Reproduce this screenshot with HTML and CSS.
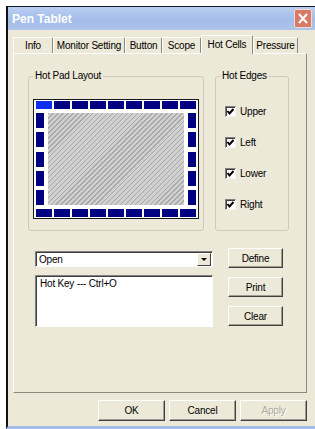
FILE: index.html
```html
<!DOCTYPE html>
<html lang="en">
<head>
  <meta charset="UTF-8" />
  <title>Pen Tablet</title>
  <link rel="stylesheet" href="styles.css">
</head>
<body>
  <div class="window">
    <div class="titlebar">
      <span class="title">Pen Tablet</span>
      <span class="close">
        <svg width="18" height="19" viewBox="0 0 18 19"><path d="M5 5 L13 14 M13 5 L5 14" stroke="#fff" stroke-width="2" fill="none"/></svg>
      </span>
    </div>

    <div class="dialog">
      <!-- tab strip -->
      <div class="tabs">
        <div class="tab w-info">Info</div>
        <div class="tab w-monitor">Monitor Setting</div>
        <div class="tab w-button">Button</div>
        <div class="tab w-scope">Scope</div>
        <div class="tab w-hot selected">Hot Cells</div>
        <div class="tab w-pressure">Pressure</div>
      </div>

      <div class="panel">
        <div class="groups">
          <div class="group pad-group">
            <span class="legend">Hot Pad Layout</span>
            <div class="pad">
              <div class="row">
                <span class="cell active"></span><span class="cell"></span><span class="cell"></span>
                <span class="cell"></span><span class="cell"></span><span class="cell"></span>
                <span class="cell"></span><span class="cell"></span><span class="cell"></span>
              </div>
              <div class="mid">
                <div class="col">
                  <span class="cell"></span><span class="cell"></span><span class="cell"></span><span class="cell"></span><span class="cell"></span>
                </div>
                <div class="hatch"></div>
                <div class="col">
                  <span class="cell"></span><span class="cell"></span><span class="cell"></span><span class="cell"></span><span class="cell"></span>
                </div>
              </div>
              <div class="row">
                <span class="cell"></span><span class="cell"></span><span class="cell"></span>
                <span class="cell"></span><span class="cell"></span><span class="cell"></span>
                <span class="cell"></span><span class="cell"></span><span class="cell"></span>
              </div>
            </div>
          </div>

          <div class="group edges-group">
            <span class="legend">Hot Edges</span>
            <div class="checks">
              <div class="check"><span class="box"><svg width="9" height="9" viewBox="0 0 9 9"><path d="M1.5 4 L3.5 6.5 L7.5 2" stroke="#000" stroke-width="2" fill="none"/></svg></span>Upper</div>
              <div class="check"><span class="box"><svg width="9" height="9" viewBox="0 0 9 9"><path d="M1.5 4 L3.5 6.5 L7.5 2" stroke="#000" stroke-width="2" fill="none"/></svg></span>Left</div>
              <div class="check"><span class="box"><svg width="9" height="9" viewBox="0 0 9 9"><path d="M1.5 4 L3.5 6.5 L7.5 2" stroke="#000" stroke-width="2" fill="none"/></svg></span>Lower</div>
              <div class="check"><span class="box"><svg width="9" height="9" viewBox="0 0 9 9"><path d="M1.5 4 L3.5 6.5 L7.5 2" stroke="#000" stroke-width="2" fill="none"/></svg></span>Right</div>
            </div>
          </div>
        </div>

        <div class="lower">
          <div class="fields">
            <div class="combo">
              <span>Open</span>
              <span class="arrow"><i></i></span>
            </div>
            <div class="listbox">Hot Key --- Ctrl+O</div>
          </div>
          <div class="side">
            <button class="btn small">Define</button>
            <button class="btn small">Print</button>
            <button class="btn small">Clear</button>
          </div>
        </div>
      </div>

      <div class="footer">
        <button class="btn wide">OK</button>
        <button class="btn wide">Cancel</button>
        <button class="btn wide disabled">Apply</button>
      </div>
    </div>
  </div>
</body>
</html>
```

FILE: styles.css
```css
body {
  margin: 0;
  width: 315px;
  height: 429px;
  overflow: hidden;
  background: #fff;
  font-family: "Liberation Sans", Arial, sans-serif;
  font-size: 10px;
  letter-spacing: -0.2px;
  color: #000;
}

.window {
  margin: 6px 0 0 6px;
  height: 419px;
  border-top: 1px solid #1a1a1a;
  border-left: 2px solid #111;
  border-bottom: 3px solid #a6bce6;
  background: #ece9d8;
  display: flex;
  flex-direction: column;
}

.titlebar {
  height: 23px;
  flex: none;
  display: flex;
  align-items: center;
  justify-content: space-between;
  padding: 0 3px 0 4px;
  background: linear-gradient(#b9cef2, #a4bde9 55%, #adc4eb);
  color: #fff;
  font-size: 12px;
  font-weight: bold;
  letter-spacing: 0;
}

.close {
  width: 18px;
  height: 19px;
  box-sizing: border-box;
  display: flex;
  background: #d77a67;
  border: 1px solid #f3d9d2;
  border-radius: 2px;
}

.close svg {
  margin: -1px;
}

.dialog {
  flex: 1;
  padding: 5px 8px 0 5px;
  display: flex;
  flex-direction: column;
}

/* tabs */
.tabs {
  height: 18px;
  display: flex;
  align-items: flex-end;
}

.tab {
  box-sizing: border-box;
  height: 16px;
  border: 1px solid;
  border-bottom: none;
  border-color: #fff #8b8a80 transparent #fff;
  border-radius: 2px 2px 0 0;
  text-align: center;
  line-height: 15px;
  white-space: nowrap;
}

.tab.selected {
  height: 19px;
  margin-bottom: -1px;
  padding-top: 1px;
  position: relative;
  z-index: 1;
  background: #ece9d8;
}

.w-info { width: 40px; }
.w-monitor { width: 72px; }
.w-button { width: 37px; }
.w-scope { width: 39px; }
.w-hot { width: 52px; }
.w-pressure { width: 45px; }

.panel {
  box-sizing: border-box;
  height: 340px;
  border: 1px solid;
  border-color: #fff #8b8a80 #8b8a80 #fff;
}

/* group boxes */
.groups {
  display: flex;
  gap: 11px;
  margin: 22px 0 0 14px;
}

.group {
  box-sizing: border-box;
  height: 155px;
  border: 1px solid #cdcbbc;
  border-radius: 3px;
}

.pad-group { width: 176px; }
.edges-group { width: 74px; }

.legend {
  display: table;
  margin: -7px 0 0 4px;
  padding: 0 2px;
  line-height: 12px;
  background: #ece9d8;
}

.pad {
  box-sizing: border-box;
  width: 166px;
  height: 120px;
  margin: 17px 0 0 4px;
  padding: 1px 2px;
  border: 1px solid #1a1a1a;
  background: #fff;
  display: flex;
  flex-direction: column;
  gap: 4px;
}

.row {
  height: 8px;
  display: flex;
  gap: 2px;
}

.row .cell {
  flex: 1;
}

.cell {
  background: #000080;
}

.cell.active {
  background: #0a2df0;
}

.mid {
  height: 92px;
  display: flex;
  gap: 4px;
}

.col {
  width: 8px;
  display: flex;
  flex-direction: column;
  justify-content: space-between;
}

.col .cell {
  height: 15px;
}

.hatch {
  flex: 1;
  background: repeating-linear-gradient(135deg, #a8a8a8 0 1px, #d0d0d0 1px 3.5px);
}

.checks {
  display: flex;
  flex-direction: column;
  gap: 20px;
  margin: 24px 0 0 9px;
}

.check {
  height: 11px;
  display: flex;
  align-items: center;
  gap: 4px;
}

.box {
  box-sizing: border-box;
  width: 11px;
  height: 11px;
  display: flex;
  align-items: center;
  justify-content: center;
  background: #fff;
  border: 1px solid;
  border-color: #808080 #f4f4f0 #f4f4f0 #808080;
  box-shadow: inset 1px 1px #404040;
}

/* combo, list and side buttons */
.lower {
  display: flex;
  gap: 15px;
  margin: 17px 0 0 21px;
}

.fields {
  width: 178px;
  padding-top: 3px;
  display: flex;
  flex-direction: column;
  gap: 8px;
}

.combo,
.listbox {
  box-sizing: border-box;
  background: #fff;
  border: 1px solid;
  border-color: #808080 #fff #fff #808080;
  box-shadow: inset 1px 1px #404040;
}

.combo {
  height: 16px;
  padding: 1px 1px 1px 3px;
  display: flex;
  align-items: center;
  justify-content: space-between;
}

.arrow {
  box-sizing: border-box;
  width: 14px;
  height: 13px;
  display: flex;
  align-items: center;
  justify-content: center;
  background: #ece9d8;
  border: 1px solid;
  border-color: #fff #404040 #404040 #fff;
}

.arrow i {
  border-left: 3px solid transparent;
  border-right: 3px solid transparent;
  border-top: 3px solid #000;
}

.listbox {
  height: 52px;
  padding: 2px 4px;
}

.side {
  display: flex;
  flex-direction: column;
  gap: 9px;
}

.btn {
  box-sizing: border-box;
  padding: 0;
  background: #ece9d8;
  border: 1px solid;
  border-color: #fff #404040 #404040 #fff;
  box-shadow: inset -1px -1px #a09e92;
  font-family: inherit;
  font-size: 10px;
  letter-spacing: -0.2px;
  color: #000;
}

.btn.small {
  width: 55px;
  height: 20px;
}

.footer {
  display: flex;
  justify-content: flex-end;
  gap: 4px;
  margin-top: 7px;
}

.btn.wide {
  width: 67px;
  height: 21px;
}

.btn.disabled {
  color: #aca899;
  text-shadow: 1px 1px #fff;
}
```
